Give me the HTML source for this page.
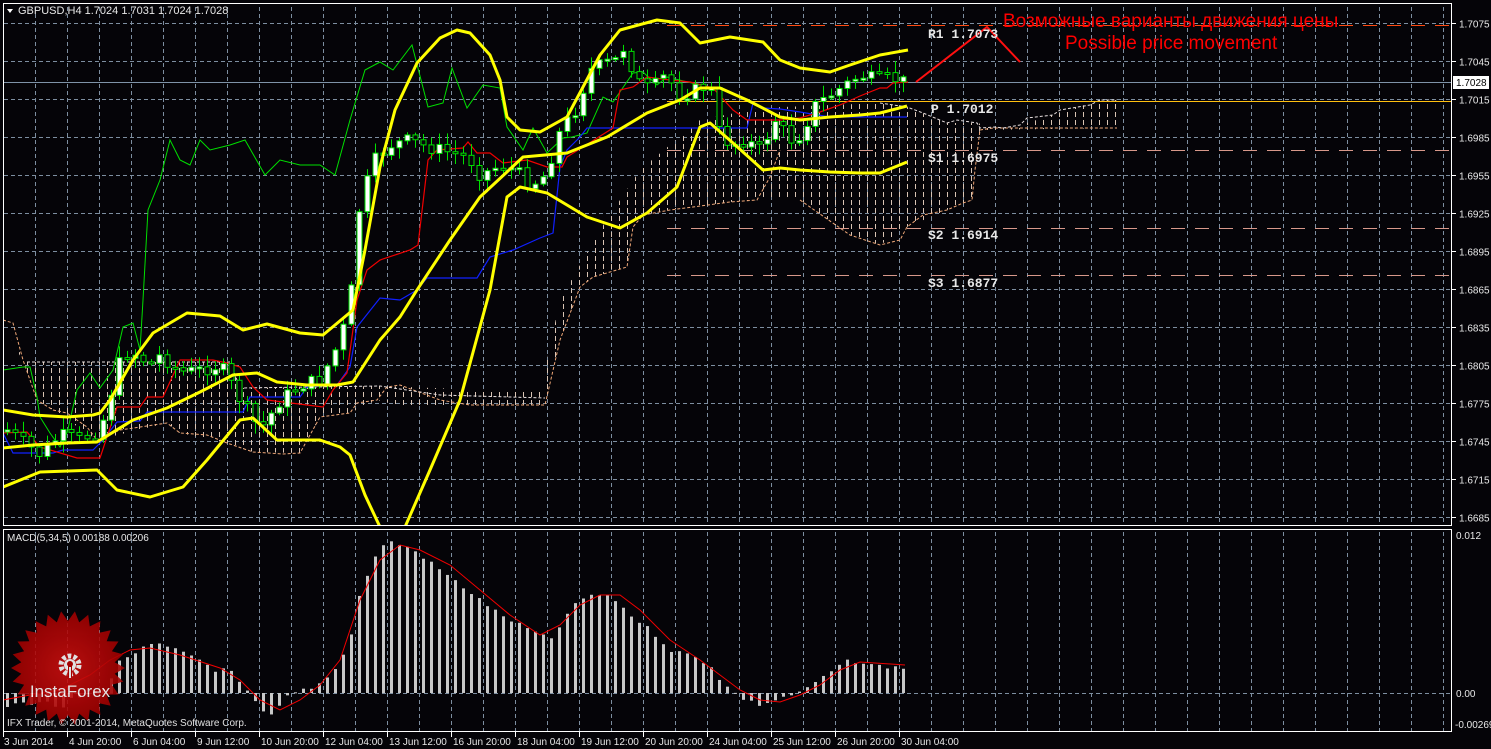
<!DOCTYPE html>
<html><head><meta charset="utf-8">
<style>
html,body{margin:0;padding:0;background:#050408;width:1491px;height:749px;overflow:hidden}
svg{display:block}
text{font-family:"Liberation Sans","DejaVu Sans",sans-serif}
</style></head>
<body>
<svg id="s" width="1491" height="749" viewBox="0 0 1491 749" xmlns="http://www.w3.org/2000/svg">
<defs>
<pattern id="vg" x="35" y="0" width="32" height="749" patternUnits="userSpaceOnUse">
<line x1="0.5" y1="0" x2="0.5" y2="749" stroke="#7d8ea0" stroke-width="1" stroke-dasharray="4,3"/>
</pattern>
<pattern id="hatch" x="3" y="0" width="8" height="8" patternUnits="userSpaceOnUse">
<line x1="0.5" y1="0" x2="0.5" y2="5" stroke="#d9c4b4" stroke-width="1"/>
</pattern>
<clipPath id="mainclip"><rect x="4" y="4" width="1447" height="521"/></clipPath>
<clipPath id="macdclip"><rect x="4" y="530" width="1447" height="200"/></clipPath>
<radialGradient id="lg" cx="0.5" cy="0.5" r="0.5">
<stop offset="0" stop-color="#d01010"/><stop offset="1" stop-color="#a00000"/>
</radialGradient>
</defs>

<rect x="3.5" y="3.5" width="1448" height="522" fill="none" stroke="#fff"/>
<rect x="3.5" y="529.5" width="1448" height="202" fill="none" stroke="#fff"/>

<rect x="4" y="4" width="1447" height="521" fill="url(#vg)"/>
<rect x="4" y="530" width="1447" height="201" fill="url(#vg)"/>

<g id="hgrid" stroke="#7d8ea0" stroke-dasharray="4,3"></g>
<line x1="4" y1="693.5" x2="1451" y2="693.5" stroke="#7d8ea0" stroke-dasharray="4,3"/>

<g clip-path="url(#mainclip)">
<polygon fill="url(#hatch)" points="3,330 27,362 230,362 240,388 380,386 540,392 560,300 600,230 640,170 700,120 760,108 880,103 907,107 947,123 977,123 995,127 1020,125 1053,115 1100,100 1117,100 1117,128 980,130 972,200 947,210 907,227 880,245 850,235 800,200 757,200 730,202 670,210 643,215 633,227 627,267 593,277 580,287 560,340 545,405 440,405 400,405 377,400 350,413 320,417 300,453 253,452 227,443 180,433 167,423 97,440 53,410 37,400 23,360"/>
<polyline fill="none" stroke="#f0a878" stroke-dasharray="3,2" points="3,320 13,323 23,360 37,400 53,410 67,413 87,427 97,440 120,430 167,423 180,433 207,435 227,443 253,452 283,454 300,453 320,417 350,413 357,403 377,400 387,387 400,385 440,400 470,405 545,405 560,340 580,287 593,277 627,267 633,227 643,215 670,210 693,207 730,202 757,200 770,177 780,150"/>
<polyline fill="none" stroke="#f0a878" stroke-dasharray="3,2" points="800,200 850,235 880,245 900,240 907,227 923,215 947,210 963,203 972,200 975,170 980,130 993,128 1117,128"/>
<polyline fill="none" stroke="#e8e0e0" stroke-dasharray="3,2" points="27,362 230,362 240,388 380,386 440,395 545,398"/>
<polyline fill="none" stroke="#e8e0e0" stroke-dasharray="3,2" points="880,103 907,107 923,113 947,123 957,120 977,123 980,128 995,127 1003,128 1020,125 1027,118 1053,115 1060,110 1090,105 1100,100 1117,100"/>

<line x1="667" y1="25.5" x2="1451" y2="25.5" stroke="#ff4a10" stroke-width="1" stroke-dasharray="14,10"/>
<line x1="667" y1="101.5" x2="1451" y2="101.5" stroke="#ffc010" stroke-width="1"/>
<line x1="667" y1="150.5" x2="1451" y2="150.5" stroke="#d8988a" stroke-dasharray="14,10"/>
<line x1="667" y1="228.5" x2="1451" y2="228.5" stroke="#d8988a" stroke-dasharray="14,10"/>
<line x1="667" y1="275.5" x2="1451" y2="275.5" stroke="#d8988a" stroke-dasharray="14,10"/>
<line x1="4" y1="82.5" x2="1451" y2="82.5" stroke="#7f93a8"/>

<polyline fill="none" stroke="#00e000" stroke-width="1" points="3,370 23,367 30,367 37,397 40,417 50,433 60,447 67,433 77,390 90,373 100,388 113,370 123,327 133,323 140,350 143,300 148,210 160,180 170,140 180,160 190,165 200,140 210,150 230,145 245,140 265,175 280,160 300,165 320,165 335,175 350,120 365,70 380,62 393,70 412,45 428,107 443,103 452,68 467,108 483,85 500,88 507,127 523,150 533,128 547,153 563,138 572,137 587,133 603,97 613,102 633,73 643,72 657,85 667,77 700,85"/>
<polyline fill="none" stroke="#1020ff" stroke-width="1.2" points="3,433 13,453 53,453 63,450 93,450 103,440 117,422 140,421 147,412 243,412 250,397 300,397 307,387 337,385 350,367 357,327 380,298 400,300 417,290 427,278 477,278 490,257 513,250 540,238 553,233 560,167 567,150 580,137 587,128 747,128 753,103 763,108 780,109 800,112 830,117 907,117"/>
<polyline fill="none" stroke="#f00000" stroke-width="1.2" points="3,433 27,432 40,447 77,458 100,458 117,407 140,407 147,397 163,397 180,360 213,360 227,363 240,367 253,387 267,400 307,405 323,407 333,390 347,373 357,300 367,270 380,260 410,250 418,245 428,160 437,150 463,148 468,142 477,153 490,153 503,163 527,160 547,167 562,167 567,157 613,128 620,90 633,87 647,77 670,80 690,82 713,88 733,110 747,120 780,120 800,118 820,112 840,105 860,96 880,88 887,88 893,83 908,82"/>

<g id="candles"></g>

<g fill="none" stroke="#ffff00" stroke-width="3" stroke-linejoin="round">
<polyline points="3,410 33,415 67,417 93,415 100,413 110,400 133,360 153,333 187,313 220,316 243,330 267,324 300,333 323,335 353,310 365,250 380,167 395,110 417,63 440,38 457,30 470,33 490,55 500,80 507,117 520,130 540,132 567,117 583,87 600,55 620,30 657,20 680,23 700,43 730,37 763,42 780,60 800,68 830,72 850,65 880,55 908,50"/>
<polyline points="3,448 33,445 67,443 97,442 133,420 167,408 200,392 233,375 257,373 277,382 307,385 337,385 353,382 380,340 400,317 417,290 450,240 480,197 523,157 567,153 607,137 647,113 680,100 700,88 720,88 747,100 780,117 800,120 830,117 860,115 880,113 907,106"/>
<polyline points="3,487 40,472 97,470 117,490 150,497 183,487 207,460 240,420 253,418 277,440 320,440 340,447 350,455 365,495 380,527 405,527 430,470 460,400 490,290 507,197 520,187 547,193 587,217 620,228 647,213 677,187 700,127 710,123 733,143 763,170 780,168 800,170 830,172 860,173 880,173 907,162"/>
</g>

<polyline fill="none" stroke="#ff1010" stroke-width="2" points="916,82 987,27 1020,62"/>
</g>

<g font-size="13" font-weight="bold" fill="#e8e8e8">
<text x="928" y="38" style="font-family:'Liberation Mono',monospace">R1 1.7073</text>
<text x="931" y="113" style="font-family:'Liberation Mono',monospace">P 1.7012</text>
<text x="928" y="162" style="font-family:'Liberation Mono',monospace">S1 1.6975</text>
<text x="928" y="239" style="font-family:'Liberation Mono',monospace">S2 1.6914</text>
<text x="928" y="287" style="font-family:'Liberation Mono',monospace">S3 1.6877</text>
</g>

<text x="1003" y="27" font-size="19" fill="#ff0000" style="font-family:'Liberation Sans','Noto Sans CJK SC',sans-serif">Возможные варианты движения цены</text>
<text x="1065" y="49" font-size="19" fill="#ff0000">Possible price movement</text>

<g clip-path="url(#macdclip)">
<g id="macd" fill="#c8c8c8"></g>
<polyline fill="none" stroke="#f00000" stroke-width="1" points="3,700 30,695 60,690 90,675 110,660 130,650 150,648 180,655 220,668 240,680 260,700 280,710 300,700 320,685 340,660 360,600 380,560 400,545 420,550 450,565 480,590 510,615 540,635 560,625 580,605 600,595 620,595 640,610 670,640 700,660 720,675 740,690 760,700 780,702 800,695 820,685 840,670 860,662 905,665"/>
</g>

<g opacity="0.88">
<polygon id="star" fill="url(#lg)"/>
<g fill="#fff" transform="translate(70,665)">
<circle r="9" fill="none" stroke="#fff" stroke-width="5" stroke-dasharray="3.5,2.2"/>
<circle r="6" fill="#fff"/>
<circle cy="-1" r="3" fill="#b00"/>
<rect x="-2" y="0" width="4" height="12" fill="#b00"/>
<rect x="-1" y="2" width="2" height="11" fill="#fff"/>
</g>
<text x="70" y="697" font-size="17" fill="#fff" text-anchor="middle">InstaForex</text>
</g>

<polygon points="7,9 13,9 10,13" fill="#fff"/>
<text x="18" y="14" font-size="11" fill="#e8e8e8">GBPUSD,H4  1.7024 1.7031 1.7024 1.7028</text>
<text x="7" y="541" font-size="10" fill="#e8e8e8">MACD(5,34,5) 0.00188 0.00206</text>
<text x="7" y="726" font-size="10" fill="#e0e0e0">IFX Trader, © 2001-2014, MetaQuotes Software Corp.</text>

<g id="axis" font-size="10" fill="#e8e8e8"></g>
<rect x="1453" y="76" width="36" height="13" fill="#fff"/>
<text x="1456" y="86" font-size="10" fill="#000">1.7028</text>
<text x="1456" y="539" font-size="10" fill="#e8e8e8">0.012</text>
<text x="1456" y="697" font-size="10" fill="#e8e8e8">0.00</text>
<text x="1455" y="728" font-size="10" fill="#e8e8e8">-0.00269</text>
<g id="times" font-size="10" fill="#e8e8e8"></g>
</svg>
<script>
(function(){
var NS="http://www.w3.org/2000/svg";
function el(t,a,p){var e=document.createElementNS(NS,t);for(var k in a)e.setAttribute(k,a[k]);p.appendChild(e);return e;}
function interp(pts,x){for(var i=0;i<pts.length-1;i++){if(x>=pts[i][0]&&x<=pts[i+1][0]){var t=(x-pts[i][0])/(pts[i+1][0]-pts[i][0]);return pts[i][1]+t*(pts[i+1][1]-pts[i][1]);}}return pts[pts.length-1][1];}
var hg=document.getElementById('hgrid'),ax=document.getElementById('axis');
var labels=["1.7075","1.7045","1.7015","1.6985","1.6955","1.6925","1.6895","1.6865","1.6835","1.6805","1.6775","1.6745","1.6715","1.6685"];
for(var i=0;i<14;i++){var y=23+38*i+0.5;el('line',{x1:4,y1:y,x2:1451,y2:y},hg);
el('line',{x1:1452,y1:y,x2:1456,y2:y,stroke:'#fff'},ax);
var t=el('text',{x:1459,y:y+4},ax);t.textContent=labels[i];}
var tm=["3 Jun 2014","4 Jun 20:00","6 Jun 04:00","9 Jun 12:00","10 Jun 20:00","12 Jun 04:00","13 Jun 12:00","16 Jun 20:00","18 Jun 04:00","19 Jun 12:00","20 Jun 20:00","24 Jun 04:00","25 Jun 12:00","26 Jun 20:00","30 Jun 04:00"];
var tg=document.getElementById('times');
for(var i=0;i<tm.length;i++){var x=3+64*i;el('line',{x1:x+.5,y1:732,x2:x+.5,y2:737,stroke:'#fff'},tg);var t2=el('text',{x:x+(i==0?1:2),y:745},tg);t2.textContent=tm[i];}
var path=[[7,430],[20,440],[40,455],[60,435],[80,440],[100,430],[120,360],[130,350],[150,365],[160,355],[180,372],[200,370],[220,365],[240,400],[260,430],[280,400],[300,385],[320,380],[340,340],[350,300],[360,200],[375,160],[390,145],[410,140],[420,145],[440,150],[460,155],[470,160],[480,175],[500,165],[515,170],[530,185],[545,175],[560,130],[575,110],[590,70],[600,65],[615,60],[625,45],[635,80],[650,90],[665,75],[680,95],[695,90],[710,85],[718,130],[730,145],[745,140],[760,150],[775,120],[790,140],[800,135],[815,105],[830,95],[845,85],[860,75],[875,80],[890,78],[905,82]];
var cg=document.getElementById('candles');var prev=432;var seed=7;
function rnd(){seed=(seed*9301+49297)%233280;return seed/233280;}
for(var x=7;x<=907;x+=8){var c=interp(path,x)+(rnd()-0.5)*14;var o=prev;var hi=Math.min(o,c)-2-rnd()*10,lo=Math.max(o,c)+2+rnd()*10;
el('line',{x1:x+.5,y1:hi,x2:x+.5,y2:lo,stroke:'#00e000'},cg);
var bt=Math.min(o,c),bh=Math.max(Math.abs(o-c),2);
el('rect',{x:x-2,y:bt,width:5,height:bh,fill:(c<o?'#fff':'#050408'),stroke:'#00e000','stroke-width':1},cg);prev=c;}
var mp=[[7,705],[20,700],[30,705],[40,700],[60,710],[70,700],[100,690],[110,680],[120,660],[130,655],[140,650],[150,645],[160,645],[175,650],[190,655],[200,660],[215,670],[230,670],[240,685],[250,695],[260,710],[270,717],[275,712],[285,698],[300,690],[310,688],[320,683],[330,675],[340,660],[350,640],[360,590],[370,570],[380,545],[390,542],[400,545],[410,548],[420,555],[440,570],[460,585],[480,600],[500,615],[520,625],[540,635],[550,640],[560,625],[570,610],[580,600],[590,595],[600,595],[615,600],[630,615],[650,630],[670,650],[690,655],[710,665],[720,680],[730,690],[745,700],[760,705],[775,700],[790,695],[800,693],[810,685],[820,680],[835,668],[850,660],[870,665],[890,667],[905,668]];
var mg=document.getElementById('macd');
for(var x=7;x<=907;x+=8){var v=interp(mp,x)+(rnd()-0.5)*4;var y0=Math.min(v,693),h=Math.abs(v-693);if(h<1)h=1;el('rect',{x:x-1,y:y0,width:3,height:h},mg);}
var pts=[],cx=68,cy=668,n=26;for(var i=0;i<n*2;i++){var r=i%2?47:57;var a=Math.PI*i/n;pts.push((cx+r*Math.cos(a)).toFixed(1)+','+(cy+r*Math.sin(a)).toFixed(1));}
document.getElementById('star').setAttribute('points',pts.join(' '));
})();
</script>
</body></html>
